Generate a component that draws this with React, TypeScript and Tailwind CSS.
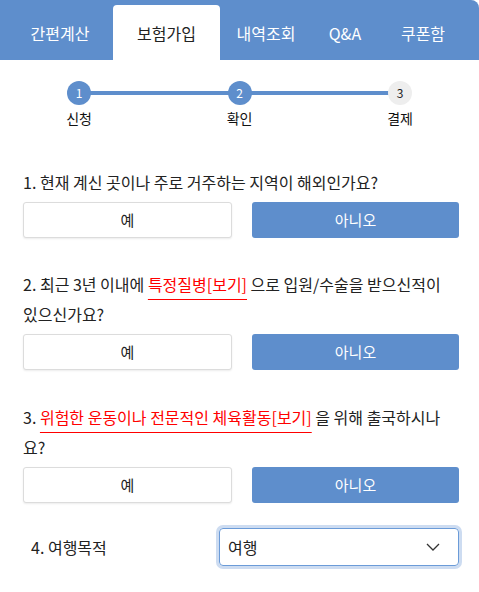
import React, { useState } from "react";

const font = { fontFamily: '"Noto Sans CJK KR", "Noto Sans", sans-serif' };

const tabs = [
  { label: "간편계산", w: "w-[106px]" },
  { label: "보험가입", w: "w-[107px]" },
  { label: "내역조회", w: "w-[92px]" },
  { label: "Q&A", w: "w-[66px]" },
  { label: "쿠폰함", w: "w-[90px]" },
];

const steps = [
  { n: "1", label: "신청", done: true },
  { n: "2", label: "확인", done: true },
  { n: "3", label: "결제", done: false },
];

const YesNo = () => (
  <div className="flex gap-5 mt-[5px]">
    <button className="flex-1 h-9 bg-white border border-[#dcdcdc] rounded-[3px] shadow-[0_1px_2px_rgba(0,0,0,0.08)] text-[15px] text-[#222]">
      예
    </button>
    <button className="flex-1 h-9 bg-[#5e8ecc] rounded-[3px] text-[15px] text-white">
      아니오
    </button>
  </div>
);

const Red = ({ children }: { children: React.ReactNode }) => (
  <span className="text-[#ff0000] underline decoration-[#ff0000] decoration-1 underline-offset-[8px]">
    {children}
  </span>
);

export default function App() {
  const [active] = useState(1);

  return (
    <div className="w-[479px] h-[592px] bg-white overflow-hidden" style={font}>
      {/* tabs */}
      <div className="h-[60px] bg-[#5e8ecc] rounded-tr-[8px] flex items-end pl-[7px]">
        {tabs.map((t, i) => (
          <div
            key={t.label}
            className={`${t.w} h-[55px] flex items-center justify-center text-[16px] ${
              i === active ? "bg-white text-[#222] rounded-t-[4px]" : "text-white"
            }`}
          >
            {t.label}
          </div>
        ))}
      </div>

      {/* stepper */}
      <div className="relative mx-[67px] mt-[21px] flex justify-between">
        <div className="absolute left-3 right-3 top-[10px] h-1 bg-[#5e8ecc]" />
        {steps.map((s) => (
          <div key={s.n} className="relative flex flex-col items-center w-6">
            <div
              className={`w-6 h-6 rounded-full flex items-center justify-center text-[12px] ${
                s.done ? "bg-[#5e8ecc] text-white" : "bg-[#eeeeee] text-[#222]"
              }`}
            >
              {s.n}
            </div>
            <div className="mt-[3px] text-[14px] leading-[20px] text-[#111] whitespace-nowrap">
              {s.label}
            </div>
          </div>
        ))}
      </div>

      <div className="pl-[23px] pr-5 text-[16px] leading-[30px] text-[#222]">
        <div className="mt-[39px]">
          <p className="pr-1">1. 현재 계신 곳이나 주로 거주하는 지역이 해외인가요?</p>
          <YesNo />
        </div>

        <div className="mt-[31px]">
          <p className="pr-1">
            2. 최근 3년 이내에 <Red>특정질병[보기]</Red> 으로 입원/수술을 받으신적이 있으신가요?
          </p>
          <YesNo />
        </div>

        <div className="mt-[32px]">
          <p className="pr-1">
            3. <Red>위험한 운동이나 전문적인 체육활동[보기]</Red> 을 위해 출국하시나요?
          </p>
          <YesNo />
        </div>

        <div className="mt-[25px] flex items-center">
          <span className="w-[196px] pl-2">4. 여행목적</span>
          <div className="flex-1 h-[38px] rounded-[4px] border border-[#6b9bd8] ring-[3px] ring-[#cddcf1] flex items-center justify-between pl-2 pr-[18px]">
            <span>여행</span>
            <svg width="14" height="8" viewBox="0 0 14 8" fill="none">
              <path d="M1 1l6 6 6-6" stroke="#333" strokeWidth="1.3" />
            </svg>
          </div>
        </div>
      </div>
    </div>
  );
}
